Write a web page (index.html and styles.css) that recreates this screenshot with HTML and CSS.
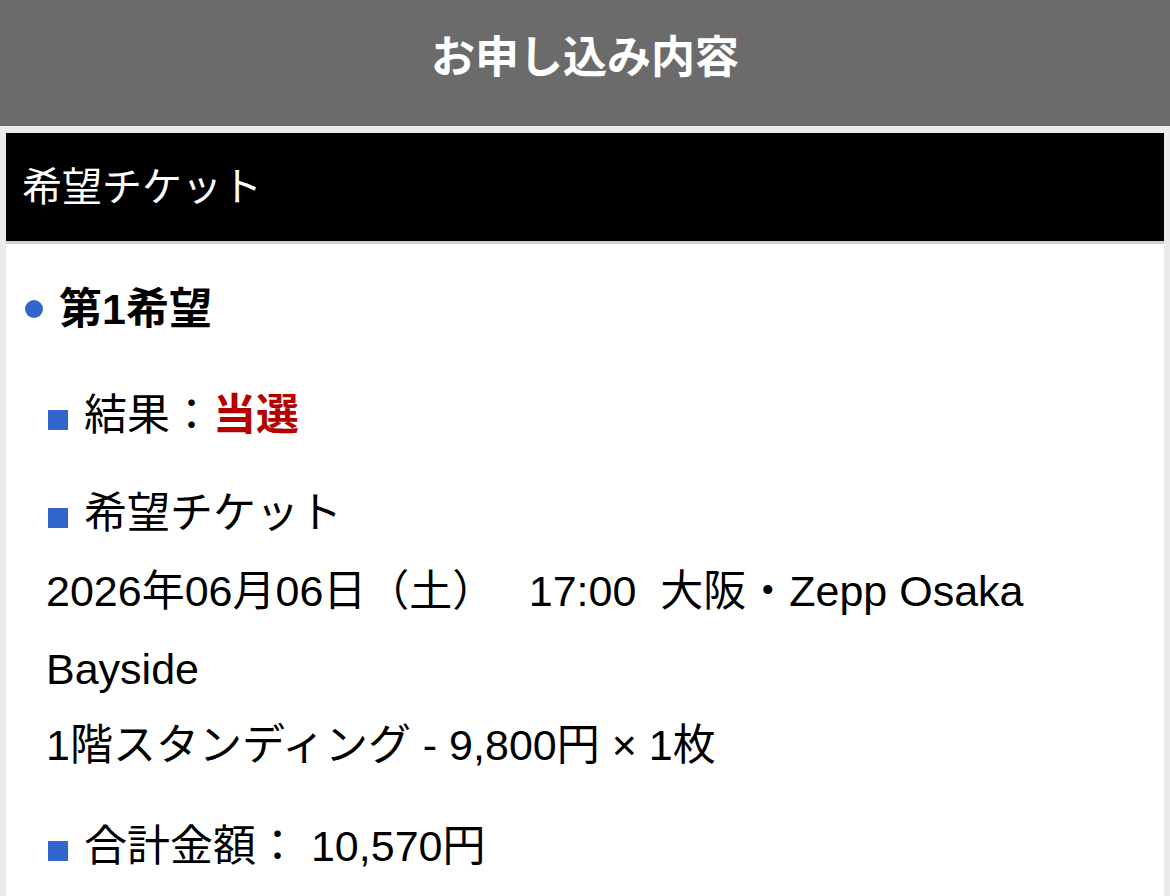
FILE: index.html
```html
<!DOCTYPE html>
<html lang="ja">
<head>
  <meta charset="UTF-8">
  <meta name="viewport" content="width=device-width, initial-scale=1.0">
  <title>お申し込み内容</title>
  <link rel="stylesheet" href="styles.css">
</head>
<body>

  <header class="page-header">
    <h1>お申し込み内容</h1>
  </header>

  <section class="panel">
    <h2 class="panel-title">希望チケット</h2>

    <div class="panel-body">
      <div class="choice-title">第1希望</div>

      <div class="field field-result">
        <span>結果：<strong class="win">当選</strong></span>
      </div>

      <div class="field field-ticket">
        <span>希望チケット</span>
      </div>
      <div class="detail">
        <p>2026年06月06日（土）　&nbsp;17:00 &nbsp;大阪・Zepp Osaka Bayside</p>
        <p>1階スタンディング - 9,800円 × 1枚</p>
      </div>

      <div class="field field-total">
        <span>合計金額： 10,570円</span>
      </div>
    </div>
  </section>

</body>
</html>
```

FILE: styles.css
```css
body {
  margin: 0;
  background: #EBEBEB;
  font-family: 'Liberation Sans', 'Noto Sans CJK JP', sans-serif;
  color: #000;
}
.page-header {
  background: #6B6B6B;
  height: 126px;
  box-sizing: border-box;
  padding-bottom: 18px;
  display: flex;
  align-items: center;
  justify-content: center;
  margin-bottom: 7px;
}
.page-header h1 {
  margin: 0;
  color: #fff;
  font-size: 44px;
  font-weight: bold;
}
.panel {
  margin: 0 6px;
  background: #fff;
}
.panel-title {
  margin: 0;
  background: #000;
  color: #fff;
  height: 108px;
  box-sizing: border-box;
  padding: 0 0 6px 16px;
  display: flex;
  align-items: center;
  font-size: 40px;
  font-weight: normal;
  border-bottom: 3px solid #CFCFCF;
  height: 111px;
}
.panel-body {
  padding: 26px 0 20px 19px;
  font-size: 43px;
  line-height: 78px;
}
.choice-title {
  display: flex;
  align-items: center;
  gap: 16px;
  font-weight: bold;
}
.choice-title::before {
  content: '';
  width: 18px;
  height: 18px;
  border-radius: 50%;
  background: #3366CC;
}
.field {
  display: flex;
  align-items: center;
  gap: 16px;
  margin-left: 23px;
}
.field::before {
  content: '';
  width: 20px;
  height: 20px;
  margin-top: 10px;
  background: #3366CC;
  flex-shrink: 0;
}
.field-result {
  margin-top: 28px;
}
.field-ticket {
  margin-top: 20px;
}
.field-total {
  margin-top: 23px;
}
.win {
  color: #B30000;
}
.detail {
  margin-left: 21px;
  padding-right: 40px;
}
.detail p {
  margin: 0;
}
.detail p + p {
  margin-top: -2px;
}
```
